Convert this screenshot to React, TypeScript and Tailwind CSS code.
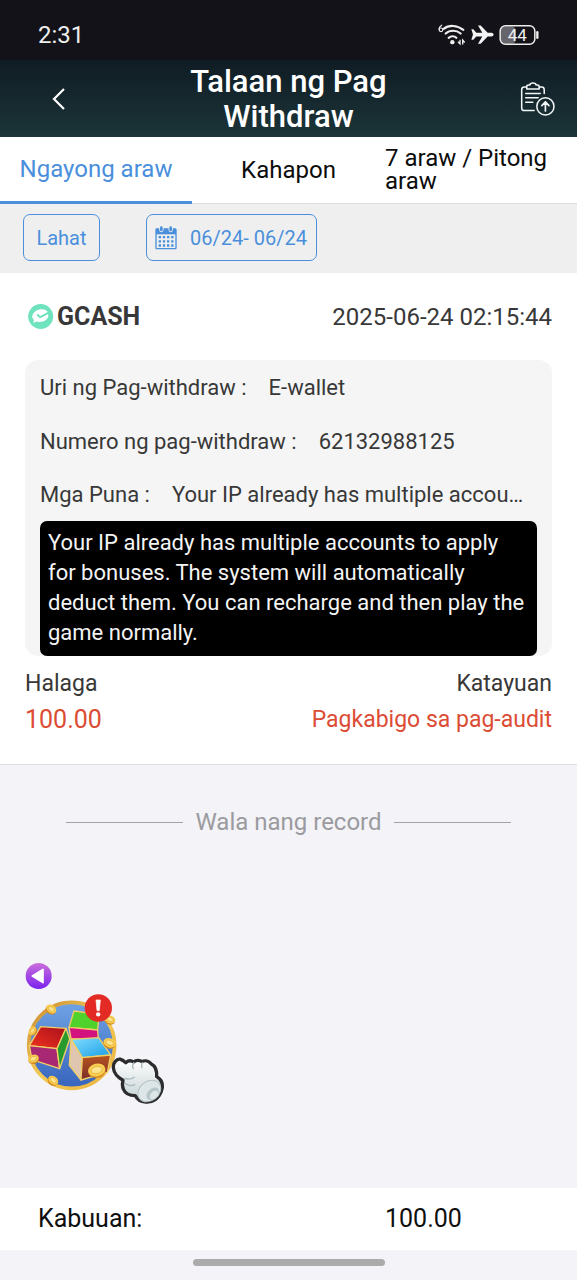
import { useState } from "react";

const tabs = ["Ngayong araw", "Kahapon", "7 araw / Pitong araw"];

const record = {
  channel: "GCASH",
  time: "2025-06-24 02:15:44",
  type: "E-wallet",
  number: "62132988125",
  remark:
    "Your IP already has multiple accounts to apply for bonuses. The system will automatically deduct them. You can recharge and then play the game normally.",
  amount: "100.00",
  status: "Pagkabigo sa pag-audit",
};

function StatusIcons() {
  return (
    <svg viewBox="20 20 315 80" className="w-[105px] h-[27px]" fill="none">
      <path d="M37 32c-5 3-8 8-8 13" stroke="#eee" strokeWidth="3.5" strokeLinecap="round" />
      <circle cx="35" cy="46" r="5.5" stroke="#eee" strokeWidth="3.5" />
      <g stroke="#eee" strokeWidth="6.5" strokeLinecap="round">
        <path d="M43 43c15-12 40-12 59 3" />
        <path d="M49 57c12-11 32-11 45 0" />
        <path d="M58 70c7-6 17-6 23 0" />
      </g>
      <circle cx="69" cy="83" r="6.5" fill="#eee" />
      <path d="M92 76v12l-6-6M100 90V77l6 7" stroke="#eee" strokeWidth="4" />
      <path
        d="M126 44h6l9 11h18l-13-22h8l21 22h11c9 1 9 10 0 11h-11l-21 22h-8l13-22h-18l-9 10h-6l5-16z"
        fill="#f4f4f4"
      />
      <rect x="214" y="36" width="46" height="52" rx="14" fill="#66656b" />
      <rect x="212.500" y="33.500" width="104" height="56" rx="16" stroke="#eee" strokeWidth="4.500" />
      <path d="M324 53v17" stroke="#eee" strokeWidth="7" strokeLinecap="round" />
      <text x="264" y="80" textAnchor="middle" fontFamily="Roboto, sans-serif" fontSize="51" fill="#eee">
        44
      </text>
    </svg>
  );
}

function ClipboardIcon() {
  return (
    <svg
      viewBox="265 195 110 110"
      className="w-[37px] h-[37px]"
      fill="none"
      stroke="#f4f7f7"
      strokeWidth="4.500"
      strokeLinecap="round"
      strokeLinejoin="round"
    >
      <path d="M287 216h-6c-5 0-8 3-8 8v54c0 5 3 8 8 8h29M325 216h7c5 0 8 3 8 8v11" />
      <path d="M288 222v-7c0-4 2-5 6-5h3c1-8 18-8 19 0h4c4 0 5 2 5 5v7z" />
      <path d="M285 235h43M285 248h37M285 261h21" />
      <circle cx="343.500" cy="273.500" r="25.500" />
      <path d="M343.500 287v-27M333 271l10.500-11 10.500 11" strokeWidth="5" />
    </svg>
  );
}

function CalendarIcon() {
  return (
    <svg viewBox="436 62 66 72" className="w-[22px] h-[24px]">
      <path
        d="M442 69h54c3 0 5 2 5 5v53c0 3-2 5-5 5h-54c-3 0-5-2-5-5V74c0-3 2-5 5-5z"
        fill="#4a8fdc"
      />
      <path d="M441 87h56v41h-56z" fill="#efefef" />
      <path
        d="M447 95.500h46M447 108h46M447 120.500h46"
        stroke="#4a8fdc"
        strokeWidth="7"
        strokeDasharray="7 5.500"
      />
      <g stroke="#efefef" strokeWidth="13" strokeLinecap="round">
        <path d="M455 68v6M483 68v6" />
      </g>
      <g stroke="#4a8fdc" strokeWidth="8" strokeLinecap="round">
        <path d="M455 67v7M483 67v7" />
      </g>
    </svg>
  );
}

function GcashIcon() {
  return (
    <svg viewBox="82 40 80 82" className="w-[27px] h-[27px]">
      <circle cx="122.500" cy="81" r="38" fill="#6fe3bd" />
      <path
        d="M143 66c-7-9-25-9-36-1-11 7-13 20-5 26 0 4-1 6-3 8 5 0 8-1 11-3 17 5 34-3 36-18z"
        fill="#fff"
      />
      <path d="M112 75l9 8 29-15" fill="none" stroke="#6fe3bd" strokeWidth="6" strokeLinejoin="round" />
    </svg>
  );
}

function Coin({ x, y, r = 13, rotate = 0 }: { x: number; y: number; r?: number; rotate?: number }) {
  return (
    <g transform={`translate(${x} ${y}) rotate(${rotate})`}>
      <ellipse rx={r * 1.25} ry={r} cy="3" fill="#d58a20" />
      <ellipse rx={r * 1.25} ry={r * 0.9} fill="#f8cf50" />
      <ellipse rx={r * 0.8} ry={r * 0.5} fill="#fbe48c" stroke="#e3a733" strokeWidth="2" />
    </g>
  );
}

function FloatingGame() {
  return (
    <svg viewBox="0 0 510 495" className="w-[170px] h-[165px]">
      <defs>
        <linearGradient id="purple" x1="0" y1="0" x2="0" y2="1">
          <stop offset="0" stopColor="#cb6fdb" />
          <stop offset="1" stopColor="#7a22ee" />
        </linearGradient>
        <linearGradient id="sky" x1="0" y1="0" x2="0" y2="1">
          <stop offset="0" stopColor="#6fa3e4" />
          <stop offset="1" stopColor="#3764bd" />
        </linearGradient>
        <linearGradient id="gold" x1="0" y1="0" x2="1" y2="1">
          <stop offset="0" stopColor="#c88a32" />
          <stop offset=".5" stopColor="#f4cb56" />
          <stop offset="1" stopColor="#eab13c" />
        </linearGradient>
        <linearGradient id="red" x1="1" y1="0" x2="0" y2="1">
          <stop offset="0" stopColor="#a80f1c" />
          <stop offset="1" stopColor="#f2331e" />
        </linearGradient>
        <linearGradient id="cyan" x1="0" y1="0" x2="1" y2="1">
          <stop offset="0" stopColor="#83dcff" />
          <stop offset="1" stopColor="#189fe6" />
        </linearGradient>
        <linearGradient id="brown" x1="0" y1="0" x2="0" y2="1">
          <stop offset="0" stopColor="#b6531f" />
          <stop offset="1" stopColor="#7b2c2a" />
        </linearGradient>
        <linearGradient id="glove" x1="0" y1="0" x2="0" y2="1">
          <stop offset="0" stopColor="#ffffff" />
          <stop offset="1" stopColor="#c3d0d3" />
        </linearGradient>
      </defs>

      <circle cx="86" cy="78" r="39" fill="url(#purple)" />
      <path d="M67 78l32-20v40z" fill="#fff" stroke="#fff" strokeWidth="5" strokeLinejoin="round" />

      <circle cx="185" cy="286" r="129" fill="url(#sky)" stroke="url(#gold)" strokeWidth="11" />

      <g stroke="#f0ce68" strokeWidth="4" strokeLinejoin="round">
        <path d="M192 183l75 10-4 47-86-8z" fill="#4fd22c" />
        <path d="M177 232l86 8 2 30-82-4z" fill="#d3127f" />
        <path d="M92 230l76 5-27 61-83-9z" fill="url(#red)" />
        <path d="M58 287l83 9 8 60-83-27z" fill="#a92874" />
        <path d="M168 235l11 32-30 89-8-60z" fill="#269a2c" />
        <path d="M183 268l83-5 36 52-85 8z" fill="url(#cyan)" />
        <path d="M183 268l34 55-4 67-35-44z" fill="#dfc6b0" />
        <path d="M217 323l85-8-10 52-79 23z" fill="url(#brown)" />
      </g>

      <Coin x={124} y={177} rotate={35} />
      <Coin x={67} y={242} r={11} rotate={-65} />
      <Coin x={70} y={326} r={13} rotate={-20} />
      <Coin x={130} y={391} rotate={40} />
      <Coin x={300} y={208} r={13} rotate={20} />
      <Coin x={299} y={278} r={15} rotate={20} />
      <Coin x={260} y={360} r={21} rotate={-12} />

      <circle cx="265" cy="174" r="41" fill="#e42a24" />
      <path d="M258 150h13l-3 32h-7z" fill="#fff" stroke="#fff" strokeWidth="2" />
      <circle cx="264.500" cy="193" r="6.500" fill="#fff" />

      <path
        d="M316 334c9-11 20-7 31 4 8-7 17-7 24-2 7-6 18-6 25-1 9-5 21-2 28 7 12 6 17 20 16 38 16 9 20 26 14 44-7 21-26 34-47 32-15-1-25-7-31-19-16 0-31-7-36-20-4-9-3-18-1-26-15-8-28-23-29-38 0-8 2-15 6-19z"
        fill="url(#glove)"
        stroke="#2c2c2e"
        strokeWidth="10"
        strokeLinejoin="round"
      />
      <path d="M371 338c-4 6-4 12-1 18M397 338c-3 5-3 10-1 15M345 385c10 4 20 3 28-3M347 401c8 6 19 7 27 3" fill="none" stroke="#a9babe" strokeWidth="4" strokeLinecap="round" />
      <ellipse cx="418" cy="423" rx="37" ry="29" transform="rotate(-38 418 423)" fill="#dce5e7" stroke="#b3c2c6" strokeWidth="3" />
      <ellipse cx="428" cy="431" rx="22" ry="15" transform="rotate(-45 428 431)" fill="#b7c6c9" />
      <ellipse cx="432" cy="435" rx="15" ry="10" transform="rotate(-45 432 435)" fill="#dce4e5" />
    </svg>
  );
}

export default function App() {
  const [activeTab, setActiveTab] = useState(0);

  return (
    <div className="relative flex h-[1280px] w-[577px] flex-col overflow-hidden bg-[#f3f3f8] font-['Roboto',sans-serif] text-[#383838]">
      <div className="flex h-[60px] shrink-0 items-start justify-between bg-[#131218] pl-[38px] pr-[36px] text-[#eee]">
        <span className="mt-[20px] text-[24px] leading-[30px]">2:31</span>
        <div className="mt-[21px]">
          <StatusIcons />
        </div>
      </div>

      <header className="flex h-[77px] shrink-0 items-center justify-between bg-linear-to-b from-[#101c24] to-[#1b3539] text-white">
        <button className="w-[80px] pl-[52px]">
          <svg viewBox="0 0 14 22" className="h-[22px] w-[14px]" fill="none" stroke="#fff" strokeWidth="2.200">
            <path d="M12 1L2 11l10 10" />
          </svg>
        </button>
        <h1 className="w-[260px] text-center text-[31px] font-medium leading-[35px]">
          Talaan ng Pag Withdraw
        </h1>
        <button className="flex w-[80px] justify-end pr-[21px]">
          <ClipboardIcon />
        </button>
      </header>

      <nav className="flex h-[67px] shrink-0 border-b border-[#dedede] bg-white text-[24px] leading-[23px] text-[#0c0c0c]">
        {tabs.map((tab, i) => (
          <button
            key={tab}
            onClick={() => setActiveTab(i)}
            className={
              i === activeTab
                ? "-mb-px w-[192px] border-b-[3px] border-[#4a8fdc] text-[#4a8fdc]"
                : i === 1
                  ? "w-[193px]"
                  : "w-[192px] text-left"
            }
          >
            {tab}
          </button>
        ))}
      </nav>

      <div className="flex h-[69px] shrink-0 items-start gap-[46px] bg-[#efefef] pl-[23px] pt-[10px] text-[20px] text-[#4a8fdc]">
        <button className="h-[47px] w-[77px] rounded-[7px] border border-[#4a8fdc]">Lahat</button>
        <button className="flex h-[47px] w-[171px] items-center gap-[13px] rounded-[7px] border border-[#4a8fdc] pl-[8px]">
          <CalendarIcon />
          <span>06/24- 06/24</span>
        </button>
      </div>

      <section className="h-[492px] shrink-0 border-b border-[#dcdce0] bg-white px-[25px]">
        <div className="flex h-[87px] items-center justify-between">
          <div className="flex items-center gap-[3px] pl-[2px]">
            <GcashIcon />
            <span className="text-[25px] font-bold">{record.channel}</span>
          </div>
          <span className="text-[24px]">{record.time}</span>
        </div>

        <div className="h-[296px] rounded-[13px] bg-[#f5f5f5] px-[15px] text-[22px]">
          <p className="flex h-[54px] items-center gap-[22px]">
            <span>Uri ng Pag-withdraw :</span>
            <span>{record.type}</span>
          </p>
          <p className="flex h-[54px] items-center gap-[22px]">
            <span>Numero ng pag-withdraw :</span>
            <span>{record.number}</span>
          </p>
          <p className="flex h-[53px] items-center gap-[22px]">
            <span className="shrink-0">Mga Puna :</span>
            <span className="w-[360px] truncate">{record.remark}</span>
          </p>
          <div className="h-[135px] w-[497px] rounded-[7px] bg-black px-[8px] py-[7px] leading-[30px] text-[#f4f4f4]">
            {record.remark}
          </div>
        </div>

        <div className="flex justify-between pt-[10px] text-[23px] leading-[36px]">
          <div>
            <p>Halaga</p>
            <p className="text-[25px] text-[#dc4c35]">{record.amount}</p>
          </div>
          <div className="text-right">
            <p>Katayuan</p>
            <p className="text-[#dc4c35]">{record.status}</p>
          </div>
        </div>
      </section>

      <div className="flex items-center justify-center gap-[12px] pt-[40px] text-[24px] leading-[34px] text-[#9b9b9f]">
        <i className="h-px w-[117px] bg-[#a3a3a7]" />
        <span>Wala nang record</span>
        <i className="h-px w-[117px] bg-[#a3a3a7]" />
      </div>

      <div className="absolute left-[10px] top-[950px]">
        <FloatingGame />
      </div>

      <footer className="mt-auto">
        <div className="flex h-[62px] items-center bg-white pl-[38px] text-[25px] text-[#0f0f0f]">
          <span className="w-[347px]">Kabuuan:</span>
          <span>100.00</span>
        </div>
        <div className="flex h-[30px] justify-center pt-[9px]">
          <div className="h-[7px] w-[192px] rounded-full bg-[#ababab]" />
        </div>
      </footer>
    </div>
  );
}
